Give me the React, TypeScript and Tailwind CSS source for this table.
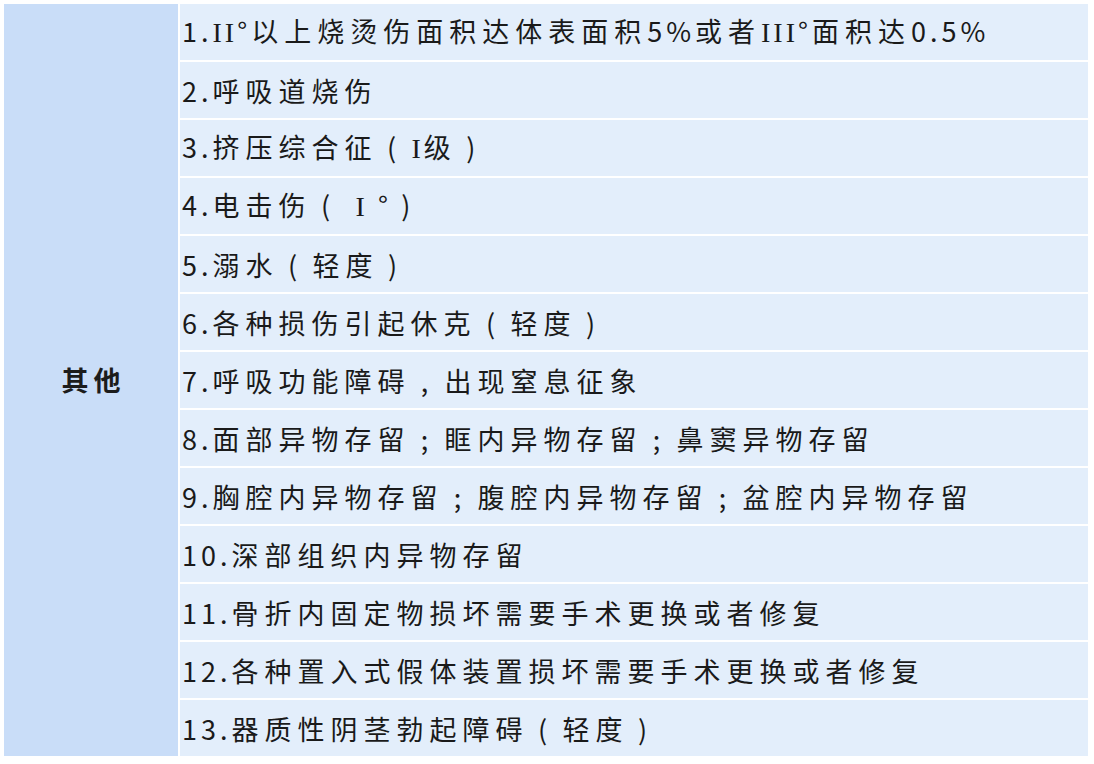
const items = [
  '1.II°以上烧烫伤面积达体表面积5%或者III°面积达0.5%',
  '2.呼吸道烧伤',
  '3.挤压综合征（I级）',
  '4.电击伤（ I °）',
  '5.溺水（轻度）',
  '6.各种损伤引起休克（轻度）',
  '7.呼吸功能障碍，出现窒息征象',
  '8.面部异物存留；眶内异物存留；鼻窦异物存留',
  '9.胸腔内异物存留；腹腔内异物存留；盆腔内异物存留',
  '10.深部组织内异物存留',
  '11.骨折内固定物损坏需要手术更换或者修复',
  '12.各种置入式假体装置损坏需要手术更换或者修复',
  '13.器质性阴茎勃起障碍（轻度）',
]

const halfWidth: Record<string, string> = { '（': '(', '）': ')', '，': ',', '；': ';' }

// latin runs are set tighter than the CJK, full-width punctuation is centred in its box,
// the roman numerals are drawn with serifs in the source
function Line({ text }: { text: string }) {
  const parts = text.split(/(I+|[\x00-\x48\x4a-\xff]+|[（），；])/).filter(Boolean)
  return (
    <>
      {parts.map((p, i) => {
        if (halfWidth[p])
          return (
            <span key={i} className="inline-block w-[34px] text-center">
              {halfWidth[p]}
            </span>
          )
        if (/^I+$/.test(p))
          return (
            <span key={i} className="tracking-[3px] font-['Liberation_Serif',serif] text-[28px]">
              {p}
            </span>
          )
        if (/^[\x00-\xff]+$/.test(p))
          return (
            <span key={i} className="tracking-[4px]">
              {p}
            </span>
          )
        return <span key={i}>{p}</span>
      })}
    </>
  )
}

export default function App() {
  return (
    <div
      className="w-[1094px] h-[764px] bg-white pt-[4px] pl-[4px] pr-[6px] pb-[8px]"
      style={{ fontFamily: '"Noto Sans CJK SC", "Noto Sans", sans-serif' }}
    >
      <div className="flex gap-[2px] h-full">
        <div className="w-[174px] shrink-0 bg-[#c9ddf8] flex items-center justify-center">
          <span className="text-[27px] font-bold text-[#1c1c1c] tracking-[5px] pl-[5px]">其他</span>
        </div>
        <div className="flex-1 flex flex-col gap-[2px]">
          {items.map((t) => (
            <div key={t} className="h-[56px] bg-[#e3eefb] flex items-center pl-[2px]">
              <span className="text-[27px] leading-none text-[#1a1a1a] tracking-[6px] whitespace-nowrap">
                <Line text={t} />
              </span>
            </div>
          ))}
        </div>
      </div>
    </div>
  )
}
